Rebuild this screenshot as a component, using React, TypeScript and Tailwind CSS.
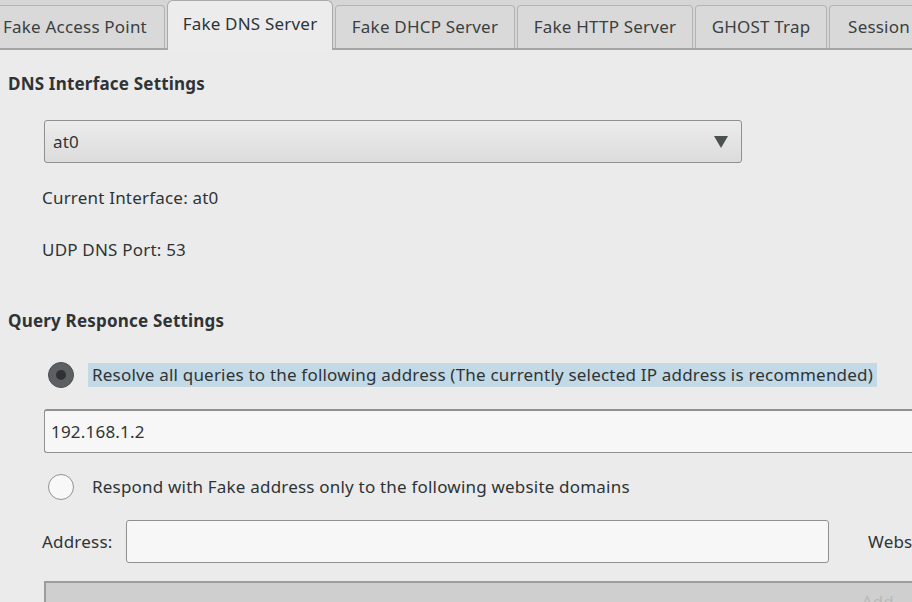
import React from 'react';

const tabs = [
  { label: 'Fake Access Point', w: 'w-[180px] -ml-[15px]' },
  { label: 'Fake DNS Server', w: 'w-[166px]', active: true },
  { label: 'Fake DHCP Server', w: 'w-[180px]' },
  { label: 'Fake HTTP Server', w: 'w-[176px]' },
  { label: 'GHOST Trap', w: 'w-[132px]' },
  { label: 'Session', w: 'w-[100px]' },
];

function Radio({ checked }: { checked?: boolean }) {
  return checked ? (
    <span className="flex h-[26px] w-[26px] shrink-0 items-center justify-center rounded-full bg-[#5c6063] border border-[#4a4e50]">
      <span className="h-[10px] w-[10px] rounded-full bg-[#2f3233]" />
    </span>
  ) : (
    <span className="h-[26px] w-[26px] shrink-0 rounded-full border border-[#8f9293] bg-[#f8f8f8]" />
  );
}

export default function App() {
  return (
    <div className="h-[602px] w-[912px] overflow-hidden bg-[#ebebeb] text-[17px] leading-[22px] tracking-[0.2px] text-[#2e3436] font-['Noto_Sans',sans-serif]">
      {/* Tabs */}
      <div className="flex h-[50px] items-end gap-[2px] bg-[#d6d6d6] border-b-2 border-[#a4a6a6]">
        {tabs.map((t) =>
          t.active ? (
            <div
              key={t.label}
              className={`${t.w} -mb-[2px] flex h-[50px] shrink-0 items-center justify-center rounded-t-[6px] border border-b-0 border-[#a9abab] bg-[#ececec] pb-[4px]`}
            >
              {t.label}
            </div>
          ) : (
            <div
              key={t.label}
              className={`${t.w} flex h-[43px] shrink-0 items-center justify-center rounded-t-[4px] border border-b-0 border-[#b3b5b5] bg-[#d9d9d9] text-[#3b4042]`}
            >
              {t.label}
            </div>
          )
        )}
      </div>

      {/* Content */}
      <div className="flex flex-col">
        <div className="pl-[8px] pt-[23px] font-bold">DNS Interface Settings</div>

        <div className="ml-[44px] mt-[25px] flex h-[43px] w-[698px] items-center justify-between rounded-[3px] border border-[#8d9192] bg-gradient-to-b from-[#ececec] to-[#dcdcdc] pl-[8px] pr-[12px]">
          <span>at0</span>
          <svg width="16" height="14" viewBox="0 0 16 14">
            <path d="M1 1 H15 L8 13 Z" fill="#4b5051" />
          </svg>
        </div>

        <div className="ml-[42px] mt-[24px]">Current Interface: at0</div>
        <div className="ml-[42px] mt-[30px]">UDP DNS Port: 53</div>

        <div className="pl-[8px] mt-[49px] font-bold">Query Responce Settings</div>

        <div className="ml-[48px] mt-[30px] flex items-center gap-[14px]">
          <Radio checked />
          <span className="bg-[#c3d9e5] px-[4px] py-[1px]">
            Resolve all queries to the following address (The currently selected IP address is recommended)
          </span>
        </div>

        <div className="ml-[44px] mt-[21px] flex h-[44px] w-[900px] items-center rounded-l-[3px] border border-r-0 border-[#8d9192] border-t-2 bg-[#f7f7f7] pl-[6px]">
          192.168.1.2
        </div>

        <div className="ml-[48px] mt-[21px] flex items-center gap-[18px]">
          <Radio />
          <span>Respond with Fake address only to the following website domains</span>
        </div>

        <div className="ml-[42px] mt-[20px] flex items-center">
          <span className="w-[84px] shrink-0">Address:</span>
          <div className="h-[43px] w-[703px] shrink-0 rounded-[3px] border border-[#8d9192] bg-[#f7f7f7]" />
          <span className="ml-[39px] whitespace-nowrap">Website:</span>
        </div>

        <div className="ml-[44px] mt-[18px] flex h-[30px] w-[900px] items-start justify-end border-l-2 border-t-2 border-[#9c9e9e] bg-[#cfcfcf] pr-[50px]">
          <span className="mt-[8px] text-[#b8baba]">Add</span>
        </div>
      </div>
    </div>
  );
}
